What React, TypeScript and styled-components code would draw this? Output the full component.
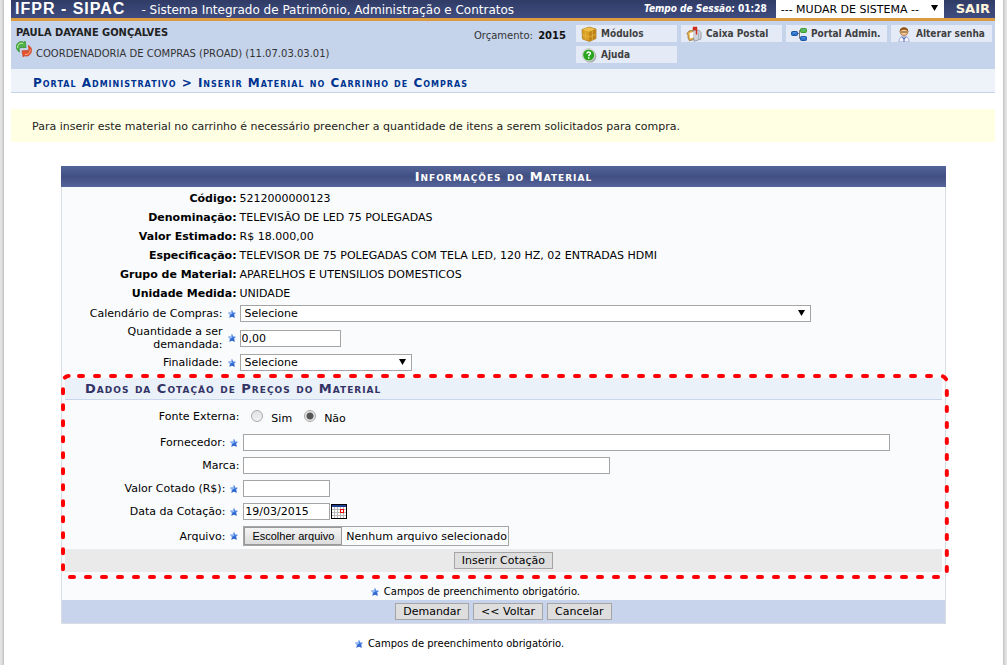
import React, { useRef, useState } from 'react';
import styled, { createGlobalStyle } from 'styled-components';

const verdana = 'Verdana, "DejaVu Sans", sans-serif';
const tahoma = 'Tahoma, "DejaVu Sans Condensed", "DejaVu Sans", sans-serif';
const arial = 'Arial, "Liberation Sans", sans-serif';

const GlobalStyle = createGlobalStyle`
  *, *::before, *::after { box-sizing: border-box; }
  body {
    margin: 0;
    background: #e3e3e3;
    color: #000;
    font: 11px/13px ${verdana};
  }
  input, select, button { font: inherit; color: inherit; border-radius: 0; margin: 0; }
  a { color: inherit; text-decoration: none; }
  svg { flex-shrink: 0; }
`;

const Page = styled.div`
  min-height: 100vh;
  margin: 0 4px;
  padding: 0 8px 0 7px;
  background: #fff;
  box-shadow: 0 0 2px 1px #bbb;
`;

const TopBar = styled.header`
  display: flex;
  align-items: center;
  height: 21px;
  padding: 0 5px 0 4px;
  border-bottom: 3px solid #dc9b3e;
  background: linear-gradient(#303c66, #3f4c80);
  color: #fff;
  white-space: nowrap;
`;

const Brand = styled.strong`
  font: bold 16px/18px ${arial};
  letter-spacing: 1px;
  margin-right: 16px;
`;

const SystemName = styled.span`
  flex: 1;
  padding-top: 2px;
  font: 12px/18px ${verdana};
`;

const Session = styled.span`
  font: bold 10px/18px ${tahoma};
  margin-right: 9px;
`;

const SelectBox = styled.span<{ $width: string; $tall?: boolean }>`
  position: relative;
  display: inline-block;
  width: ${p => p.$width};
  height: ${p => (p.$tall ? 18 : 17)}px;

  select {
    appearance: none;
    display: block;
    width: 100%;
    height: 100%;
    padding: 0 18px 0 4px;
    border: 1px solid ${p => (p.$tall ? '#fff' : '#a5a5a5')};
    background: #fff;
    color: #000;
    outline: 0;
  }
  svg {
    position: absolute;
    right: 6px;
    top: 5px;
    pointer-events: none;
  }
`;

const Exit = styled.a`
  margin-left: 12px;
  font: bold 13px/18px ${verdana};
  color: #fff5dc;
`;

const UserPanel = styled.section`
  display: flex;
  align-items: flex-start;
  min-height: 48px;
  padding: 4px 3px 4px 5px;
  background: #c5d3eb;
  color: #333;
`;

const UserInfo = styled.div`
  flex: 1;
`;

const UserName = styled.strong`
  display: block;
  padding-top: 1px;
  font: bold 11px/13px ${tahoma};
  color: #222;
`;

const Department = styled.div`
  display: flex;
  gap: 4px;
  font-size: 10px;
  line-height: 30px;
  height: 26px;
  svg { margin-top: 2px; }
`;

const Budget = styled.div`
  padding-top: 4px;
  margin-right: 10px;
  font-size: 10px;
  b { margin-left: 2px; color: #111; }
`;

const Menu = styled.nav`
  display: grid;
  grid-template-columns: repeat(4, 101px);
  gap: 4px;
`;

const MenuLink = styled.a`
  display: flex;
  align-items: center;
  height: 17px;
  padding-left: 5px;
  gap: 4px;
  background: #e4ebf7;
  font: bold 10px/17px ${tahoma};
  color: #404040;
  white-space: nowrap;
`;

const Breadcrumb = styled.h1`
  margin: 0;
  padding: 6px 22px 1px;
  border-bottom: 1px solid #c3d3ea;
  background: #eef3fa;
  color: #003390;
  font: small-caps bold 12px/16px ${verdana};
  letter-spacing: 1px;
`;

const Notice = styled.p`
  margin: 16px 0 24px;
  padding: 11px 21px 9px;
  background: #ffffe4;
  color: #222;
  line-height: 13px;
`;

const FormPanel = styled.form`
  margin: 0 5% 0 50px;
  border: 1px solid #dadde3;
  border-top: 0;
  background: #fafbfd;
`;

const PanelTitle = styled.h2`
  margin: 0 -1px 2px;
  height: 21px;
  background: linear-gradient(#54659a, #414f82 50%, #55649a);
  color: #fff;
  text-align: center;
  font: small-caps bold 13px/22px ${verdana};
  letter-spacing: 1px;
`;

const Facts = styled.table`
  width: 100%;
  table-layout: fixed;
  border-collapse: collapse;

  th, td { height: 19px; padding: 0; text-align: left; }
  th { width: 20%; padding-right: 2px; text-align: right; }
  td { padding-left: 1px; }
`;

const Cell = styled.div`
  display: flex;
  align-items: center;
  padding-left: 3px;
`;

const Row = styled.div<{ $height: number }>`
  display: grid;
  grid-template-columns: calc(20% - 2px) 1fr;
  align-items: center;
  min-height: ${p => p.$height}px;
`;

const Label = styled.label<{ $wide?: boolean }>`
  display: flex;
  align-items: center;
  justify-content: flex-end;
  gap: 4px;
  padding-left: ${p => (p.$wide ? 0 : 24)}px;
  text-align: right;
  white-space: ${p => (p.$wide ? 'nowrap' : 'normal')};
`;

const TextInput = styled.input<{ $width: string }>`
  width: ${p => p.$width};
  height: 17px;
  padding: 0 1px;
  border: 1px solid #a5a5a5;
  background: #fff;
  outline: 0;
`;

const QuoteGroup = styled.section`
  position: relative;
  margin: 5px 3px 0;

  ${Row} { grid-template-columns: calc(20% - 1px) 1fr; }
  ${Cell} { padding: 0 3px 0 4px; }
`;

const DashedOutline = styled.svg`
  position: absolute;
  left: -2px;
  top: -2px;
  width: calc(100% + 7px);
  height: calc(100% + 7px);
  overflow: visible;
  pointer-events: none;
`;

const GroupTitle = styled.h3`
  margin: 0 0 1px;
  padding-left: 20px;
  border-bottom: 1px solid #c8d5ea;
  background: #ebf1f9;
  color: #333366;
  font: small-caps bold 13px/21px ${verdana};
  letter-spacing: 1px;
`;

const Choice = styled.label`
  display: flex;
  align-items: center;
  gap: 8px;
  margin-left: 8px;
  margin-right: 4px;
  span { padding-top: 5px; }
`;

const Radio = styled.input`
  appearance: none;
  width: 12px;
  height: 12px;
  border: 1px solid #a8a8a8;
  border-radius: 50%;
  background: linear-gradient(#e2e2e2, #f2f2f2);
  &:checked {
    background: radial-gradient(circle, #555 0 3px, #e8e8e8 4px);
  }
`;

const CalendarButton = styled.button`
  display: block;
  margin-left: 1px;
  padding: 0;
  border: 0;
  background: none;
  svg { display: block; }
`;

const FileBox = styled.div`
  display: flex;
  align-items: center;
  height: 20px;
  border: 1px solid #a5a5a5;
  padding-right: 1px;
  input { display: none; }
`;

const FileButton = styled.button`
  height: 18px;
  width: 98px;
  margin-right: 4px;
  padding: 0;
  border: 1px solid #999;
  background: linear-gradient(#f4f4f4, #dcdcdc);
  font: 11px/16px ${arial};
`;

const Actions = styled.div<{ $grey?: boolean }>`
  display: flex;
  justify-content: center;
  gap: 4px;
  padding: 3px 0;
  background: ${p => (p.$grey ? '#eaeaea' : '#c8d4ec')};
`;

const ActionButton = styled.button`
  height: 17px;
  padding: 0 7px;
  border: 1px solid #a5a5a5;
  background: #dedede;
  line-height: 15px;
`;

const Required = styled.p<{ $last?: boolean }>`
  display: flex;
  align-items: center;
  justify-content: center;
  gap: 4px;
  margin: 0;
  padding: ${p => (p.$last ? '14px 88px 14px 0' : '14px 57px 2px 0')};
  font-size: 10px;
  line-height: 12px;
`;

const Star = () => (
  <svg width="10" height="10" viewBox="0 0 10 10" aria-hidden="true">
    <path d="M5 .8 6.2 3.500 9 3.800 7.100 5.800 7.600 8.800 5 7.500 2.400 8.800 2.900 5.800 1 3.800 3.800 3.500Z" fill="#4a82e2" />
    <path d="M5 .8 3.800 3.500 1 3.800 2.900 5.800 5 5Z" fill="#93b7f2" />
    <path d="M5 5 7.100 5.800 7.600 8.800 5 7.500 2.400 8.800 3.400 6.400Z" fill="#3066cc" />
  </svg>
);

const Arrow = () => (
  <svg width="7" height="6" viewBox="0 0 7 6" aria-hidden="true">
    <path d="M0 0h7L3.500 6Z" fill="#000" />
  </svg>
);

const SwapIcon = () => (
  <svg width="16" height="16" viewBox="0 0 16 16" aria-hidden="true">
    <path d="M3.500 11C-1 8.500-.5 2.500 3.500 1 5 .3 6.500.5 7.500 1.200L9.300.2 10 6.500l-6 .2L5.800 4.600C3.500 4.200 2.800 7 3.500 11Z" fill="#52b543" stroke="#2c8a2c" strokeWidth=".7" />
    <path d="M1.700 7C1.300 3.500 4 1.500 7 2.500" fill="none" stroke="#c2f0b2" />
    <path d="M12.300 4.500c4.500 1.800 4 8 .3 10-1.300.7-2.600.7-3.600.1L7.200 16 6 9.800l6-.3-1.700 2C12.500 11.800 13.300 8.500 12.300 4.500Z" fill="#ea5228" stroke="#c23d1d" strokeWidth=".7" />
    <path d="M14.200 8.500c.3 3.200-2.200 5.700-5.200 4.800" fill="none" stroke="#ffb08c" />
  </svg>
);

const BoxIcon = () => (
  <svg width="16" height="16" viewBox="0 0 16 16" aria-hidden="true">
    <path d="M1 3.500 8 1l7 2v9.500L8.500 15.500 1.500 13Z" fill="#d99f20" stroke="#a87518" strokeWidth=".7" />
    <path d="M1.300 3.500 8 1.300l6.500 1.900-6.500 2.500Z" fill="#eec04a" />
    <path d="M8.300 5.700v9.500l6.400-3V3.300Z" fill="#bd8215" />
    <path d="m4.500 2.500 6.800 2.200V14M1.500 8.800 8.300 11l6.400-2.500M11.300 2.200 4.700 4.500V14" fill="none" stroke="#e9bd50" strokeWidth=".7" />
  </svg>
);

const HelpIcon = () => (
  <svg width="16" height="16" viewBox="0 0 16 16" aria-hidden="true">
    <circle cx="9" cy="9.300" r="6.300" fill="#a3a6ac" />
    <circle cx="7.700" cy="8" r="6.500" fill="#e9ece9" stroke="#bbb" strokeWidth=".6" />
    <circle cx="7.700" cy="8" r="5.600" fill="#2ba51f" />
    <path d="M5.900 6.700C6 4.500 9.500 4.600 9.400 6.500 9.300 7.700 7.700 7.700 7.700 9.200M7.700 10.300v1.400" fill="none" stroke="#fff" strokeWidth="1.400" />
  </svg>
);

const MailIcon = () => (
  <svg width="16" height="16" viewBox="0 0 16 16" aria-hidden="true">
    <path d="M.8 7.500 3 5l5-1 1 9-5.500 1.800L2 12V9Z" fill="#e3ad48" stroke="#8d6b2e" strokeWidth=".7" />
    <path d="M7 5.500c1-2 6.500-2 8 1V13l-7 2.300Z" fill="#cfd3da" stroke="#8a919c" strokeWidth=".8" />
    <path d="M3.500 7 7.500 6v5.500L4 12.500Z" fill="#fff" />
    <path d="M10.500 8.500V1.500h-3V3.500h3" fill="#e03427" stroke="#d02a1c" strokeWidth="1.400" />
    <path d="M12.500 6.500v7" stroke="#aab1bd" />
  </svg>
);

const NodesIcon = () => (
  <svg width="16" height="16" viewBox="0 0 16 16" aria-hidden="true">
    <path d="M6 7.500h2.500M10 4.500H8.500v8H10" fill="none" stroke="#777" />
    <rect x=".5" y="5.500" width="6" height="4" rx="1" fill="#2d71ce" stroke="#1b559f" />
    <rect x="9.500" y="2.500" width="6" height="4" rx="1" fill="#57bd45" stroke="#3b9931" />
    <rect x="9.500" y="10.500" width="6" height="4" rx="1" fill="#2d71ce" stroke="#1b559f" />
    <path d="M2 6.800h3M11 3.800h3M11 11.800h3" stroke="#6aa9e8" strokeWidth=".8" />
  </svg>
);

const PersonIcon = () => (
  <svg width="16" height="16" viewBox="0 0 16 16" aria-hidden="true">
    <path d="M3 16c0-4 2-6 5-6s5 2 5 6Z" fill="#f3f6ff" stroke="#8b9acb" strokeWidth=".8" />
    <path d="M8 10.500V16M5.500 11 8 13l2.500-2" fill="none" stroke="#4f65ae" />
    <circle cx="8" cy="5.500" r="4" fill="#f6c793" stroke="#a66c34" strokeWidth=".7" />
    <path d="M3.700 5.500C3.500 0 12.500 0 12.300 5.500 10 3 6 3 3.700 5.500Z" fill="#8d561e" />
    <path d="M4.500 6h7" stroke="#634320" strokeWidth=".9" />
  </svg>
);

const CalendarIcon = () => (
  <svg width="16" height="15" viewBox="0 0 16 15" aria-hidden="true" shapeRendering="crispEdges">
    <rect width="16" height="15" fill="#000" />
    <rect x="1" y="1" width="14" height="13" fill="#fff" />
    <rect x="1" y="1" width="14" height="2" fill="#203f93" />
    <path d="M1 5.500h14M1 8.500h14M1 11.500h14M3.500 3v11M6.500 3v11M9.500 3v11M12.500 3v11" stroke="#bbb" />
    <rect x="9.500" y="5.500" width="3" height="3" fill="#fff" stroke="#f00" />
  </svg>
);

const facts = [
  ['Código:', '5212000000123'],
  ['Denominação:', 'TELEVISÃO DE LED 75 POLEGADAS'],
  ['Valor Estimado:', 'R$ 18.000,00'],
  ['Especificação:', 'TELEVISOR DE 75 POLEGADAS COM TELA LED, 120 HZ, 02 ENTRADAS HDMI'],
  ['Grupo de Material:', 'APARELHOS E UTENSILIOS DOMESTICOS'],
  ['Unidade Medida:', 'UNIDADE'],
];

const menu = [
  { text: 'Módulos', Icon: BoxIcon },
  { text: 'Caixa Postal', Icon: MailIcon },
  { text: 'Portal Admin.', Icon: NodesIcon },
  { text: 'Alterar senha', Icon: PersonIcon },
  { text: 'Ajuda', Icon: HelpIcon },
];

export default function App() {
  const fileRef = useRef<HTMLInputElement>(null);
  const [fileName, setFileName] = useState('Nenhum arquivo selecionado');

  return (
    <>
      <GlobalStyle />
      <Page>
        <TopBar>
          <Brand>IFPR - SIPAC</Brand>
          <SystemName>- Sistema Integrado de Patrimônio, Administração e Contratos</SystemName>
          <Session><i>Tempo de Sessão:</i> 01:28</Session>
          <SelectBox $width="168px" $tall>
            <select aria-label="Mudar de sistema"><option>--- MUDAR DE SISTEMA --</option></select>
            <Arrow />
          </SelectBox>
          <Exit href="#sair">SAIR</Exit>
        </TopBar>

        <UserPanel>
          <UserInfo>
            <UserName>PAULA DAYANE GONÇALVES</UserName>
            <Department><SwapIcon />COORDENADORIA DE COMPRAS (PROAD) (11.07.03.03.01)</Department>
          </UserInfo>
          <Budget>Orçamento: <b>2015</b></Budget>
          <Menu>
            {menu.map(({ text, Icon }) => (
              <MenuLink href="#menu" key={text}><Icon />{text}</MenuLink>
            ))}
          </Menu>
        </UserPanel>

        <Breadcrumb>Portal Administrativo &gt; Inserir Material no Carrinho de Compras</Breadcrumb>
        <Notice>Para inserir este material no carrinho é necessário preencher a quantidade de itens a serem solicitados para compra.</Notice>

        <FormPanel onSubmit={e => e.preventDefault()}>
          <PanelTitle>Informações do Material</PanelTitle>
          <Facts>
            <tbody>
              {facts.map(([name, value]) => (
                <tr key={name}><th scope="row">{name}</th><td>{value}</td></tr>
              ))}
            </tbody>
          </Facts>
          <Row $height={21}>
            <Label htmlFor="calendario" $wide>Calendário de Compras: <Star /></Label>
            <Cell><SelectBox $width="81%"><select id="calendario"><option>Selecione</option></select><Arrow /></SelectBox></Cell>
          </Row>
          <Row $height={28}>
            <Label htmlFor="quantidade">Quantidade a ser demandada: <Star /></Label>
            <Cell><TextInput id="quantidade" $width="101px" defaultValue="0,00" /></Cell>
          </Row>
          <Row $height={21}>
            <Label htmlFor="finalidade">Finalidade: <Star /></Label>
            <Cell><SelectBox $width="172px"><select id="finalidade"><option>Selecione</option></select><Arrow /></SelectBox></Cell>
          </Row>

          <QuoteGroup>
            <GroupTitle>Dados da Cotação de Preços do Material</GroupTitle>
            <Row $height={30} role="radiogroup" aria-labelledby="fonte">
              <Label as="span" id="fonte">Fonte Externa:</Label>
              <Cell>
                <Choice><Radio type="radio" name="fonte" /><span>Sim</span></Choice>
                <Choice><Radio type="radio" name="fonte" defaultChecked /><span>Não</span></Choice>
              </Cell>
            </Row>
            <Row $height={23}>
              <Label htmlFor="fornecedor">Fornecedor: <Star /></Label>
              <Cell><TextInput id="fornecedor" $width="93%" /></Cell>
            </Row>
            <Row $height={23}>
              <Label htmlFor="marca">Marca:</Label>
              <Cell><TextInput id="marca" $width="367px" /></Cell>
            </Row>
            <Row $height={23}>
              <Label htmlFor="valor" $wide>Valor Cotado (R$): <Star /></Label>
              <Cell><TextInput id="valor" $width="87px" /></Cell>
            </Row>
            <Row $height={23}>
              <Label htmlFor="data">Data da Cotação: <Star /></Label>
              <Cell>
                <TextInput id="data" $width="87px" defaultValue="19/03/2015" />
                <CalendarButton type="button" aria-label="Abrir calendário"><CalendarIcon /></CalendarButton>
              </Cell>
            </Row>
            <Row $height={26}>
              <Label htmlFor="arquivo">Arquivo: <Star /></Label>
              <Cell>
                <FileBox>
                  <input id="arquivo" type="file" ref={fileRef} onChange={e => setFileName(e.target.files?.[0]?.name ?? 'Nenhum arquivo selecionado')} />
                  <FileButton type="button" onClick={() => fileRef.current?.click()}>Escolher arquivo</FileButton>
                  {fileName}
                </FileBox>
              </Cell>
            </Row>
            <Actions $grey><ActionButton type="button">Inserir Cotação</ActionButton></Actions>
            <DashedOutline aria-hidden="true">
              <rect width="100%" height="100%" rx="6" fill="none" stroke="#f00" strokeWidth="4" strokeLinecap="round" strokeDasharray="4 12" strokeDashoffset="6" />
            </DashedOutline>
          </QuoteGroup>

          <Required><Star />Campos de preenchimento obrigatório.</Required>
          <Actions>
            <ActionButton type="submit">Demandar</ActionButton>
            <ActionButton type="button">&lt;&lt; Voltar</ActionButton>
            <ActionButton type="button">Cancelar</ActionButton>
          </Actions>
        </FormPanel>
        <Required $last><Star />Campos de preenchimento obrigatório.</Required>
      </Page>
    </>
  );
}
